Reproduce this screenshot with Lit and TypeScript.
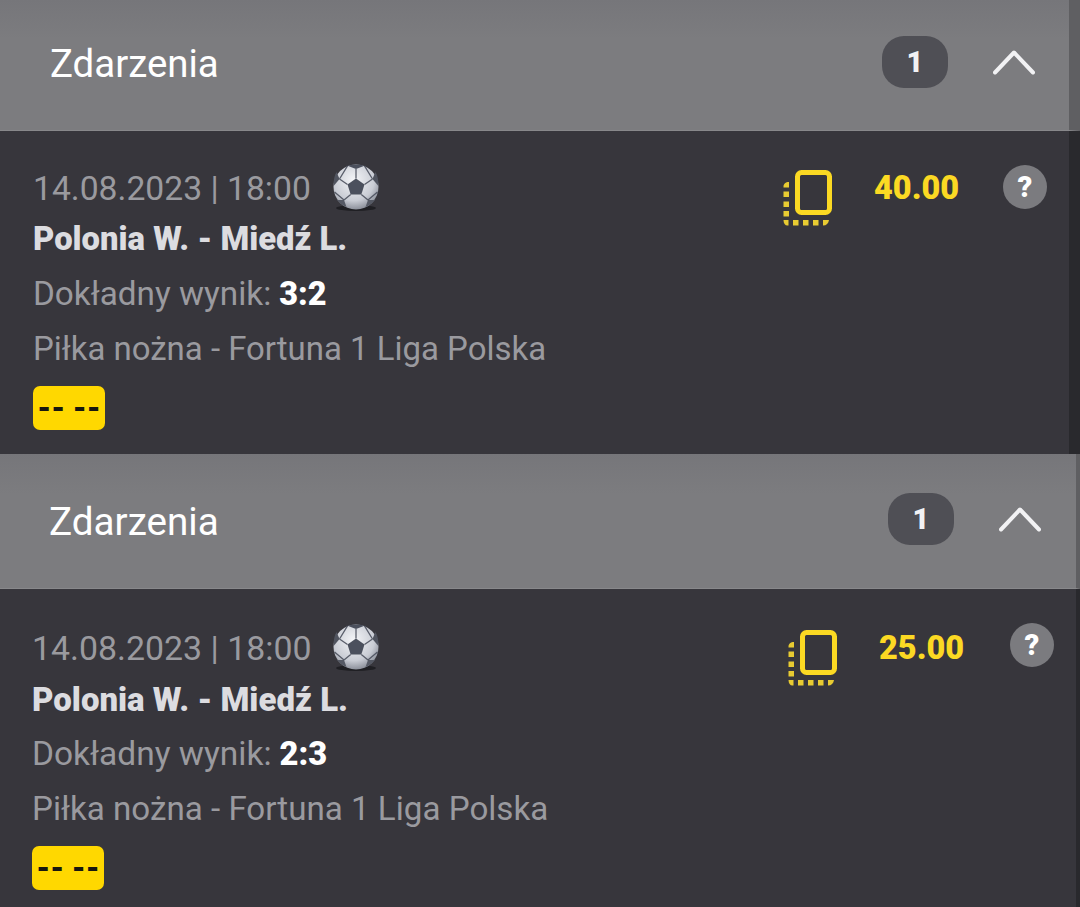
import { LitElement, html, css, svg } from 'lit';
import { customElement, property } from 'lit/decorators.js';

/**
 * One bet leg as shown on the coupon
 */
interface BetEvent {
  score: string;
  odds: string;
  headerHeight: number;
  headerLift: number;
  headerRight: number;
  titleTop: number;
  bodyHeight: number;
  bodyTop: number;
  helpGap: number;
  helpLift: number;
  inset: number;
  titleInset: number;
  stripWidth: number;
  fontScale: number;
}

const EVENTS: BetEvent[] = [
  { score: '3:2', odds: '40.00', headerHeight: 131, headerLift: 7, headerRight: 34, titleTop: 5, bodyHeight: 323, bodyTop: 30, helpGap: 44, helpLift: 0, inset: 33, titleInset: 50, stripWidth: 11, fontScale: 1 },
  { score: '2:3', odds: '25.00', headerHeight: 135, headerLift: 5, headerRight: 35, titleTop: 7, bodyHeight: 318, bodyTop: 32, helpGap: 46, helpLift: 2, inset: 32, titleInset: 49, stripWidth: 4, fontScale: 1.006 },
];

const soccerBall = svg`
  <svg class="ball" viewBox="0 0 48 48" aria-hidden="true">
    <defs>
      <radialGradient id="ball-fill" cx="45%" cy="35%" r="70%">
        <stop offset="0" stop-color="#f4f5f8"></stop>
        <stop offset="0.65" stop-color="#c9ccd4"></stop>
        <stop offset="1" stop-color="#7d818c"></stop>
      </radialGradient>
    </defs>
    <ellipse cx="24" cy="44" rx="20" ry="3" fill="#1f1f23"></ellipse>
    <circle cx="24" cy="23" r="22.5" fill="url(#ball-fill)"></circle>
    <path d="M24 14.500 32.500 20.500 29.300 30.500H18.700L15.500 20.500Z" fill="#4b505d"></path>
    <path d="M15.500 1.800 24 5 32.500 1.800C29.900 .9 27 .5 24 .5S18.100 .9 15.500 1.800Z" fill="#4b505d"></path>
    <path d="M1.600 22 7.500 15 4.600 8C2.400 11.400 1.300 16.500 1.600 22Z" fill="#50545f"></path>
    <path d="M46.400 22 40.500 15 43.400 8C45.600 11.400 46.700 16.500 46.400 22Z" fill="#50545f"></path>
    <path d="M5 36 12 36 14.500 43C10.500 41.500 7.500 39 5 36ZM43 36 36 36 33.500 43C37.500 41.500 40.500 39 43 36Z" fill="#555964"></path>
    <path d="M24 14.500V5M32.500 20.500 40.500 15M15.500 20.500 7.500 15M29.300 30.500 36 36M18.700 30.500 12 36M12 36 2.500 28M36 36 45.500 28M7.500 15 15.500 1.800M40.500 15 32.500 1.800"
      fill="none" stroke="#4b505d" stroke-width="1.300" stroke-opacity="0.9"></path>
  </svg>
`;

const copyIcon = svg`
  <svg class="copy" viewBox="0 0 49 56" aria-hidden="true">
    <rect x="14.500" y="2.500" width="32" height="40" rx="4" fill="none" stroke="#fbd923" stroke-width="5"></rect>
    <g fill="#e8cb32">
      <path d="M6 12V17.500H.5V16.500C.5 14 2.500 12 6 12Z"></path>
      <rect x=".5" y="21.500" width="5.500" height="5.500"></rect>
      <rect x=".5" y="31.500" width="5.500" height="5.500"></rect>
      <rect x=".5" y="41" width="5.500" height="5.500"></rect>
      <path d="M.5 50H5.500V55.500H4.500C2 55.500 .5 53.500 .5 50Z"></path>
      <rect x="10" y="50" width="5.500" height="5.500"></rect>
      <rect x="20" y="50" width="5.500" height="5.500"></rect>
      <rect x="30" y="50" width="5.500" height="5.500"></rect>
      <path d="M40 50H46C45.500 53.500 43.500 55.500 40 55.500Z"></path>
    </g>
  </svg>
`;

@customElement('app-root')
export class AppRoot extends LitElement {
  @property({ type: Array })
  events = EVENTS;

  static override styles = css`
    :host {
      display: block;
      width: 1080px;
      height: 907px;
      overflow: hidden;
      font-family: Roboto, 'Noto Sans', sans-serif;
      background: #37363c;
    }

    .header {
      display: flex;
      align-items: center;
      box-sizing: border-box;
      background: linear-gradient(#76767a, #7c7c7f 30%);
      border-bottom: 1px solid #88888b;
      border-right-style: solid;
      border-right-color: #5f5f62;
    }

    .title {
      flex: 1;
      color: #fff;
      font-weight: 400;
      line-height: 1;
    }

    .count {
      display: flex;
      align-items: center;
      justify-content: center;
      width: 66px;
      height: 52px;
      border-radius: 22px;
      background: #4f4f55;
      color: #f2f2f4;
      font-size: 29px;
      font-weight: 900;
    }

    .chevron {
      width: 42px;
      height: 26px;
      margin-left: 45px;
    }

    .body {
      display: flex;
      align-items: flex-start;
      box-sizing: border-box;
      background: #37363c;
      border-right-style: solid;
      border-right-color: #29292d;
      padding-right: 22px;
    }

    .info {
      flex: 1;
    }

    .row {
      display: flex;
      align-items: center;
      height: 54px;
      color: #9a9a9f;
      white-space: nowrap;
    }

    .when {
      font-size: 1.011em;
    }

    .teams {
      height: 52px;
      margin-top: -2px;
      margin-bottom: 1px;
      color: #dcdce0;
      font-size: 0.985em;
      font-weight: 900;
    }

    .market {
      height: 55px;
    }

    .market b {
      margin-left: 8px;
      color: #fff;
      font-size: 0.975em;
      font-weight: 900;
    }

    .sport {
      font-size: 0.99em;
    }

    .ball {
      width: 48px;
      height: 48px;
      margin-left: 21px;
    }

    .badge {
      display: flex;
      align-items: center;
      justify-content: center;
      width: 72px;
      height: 44px;
      margin-top: 11px;
      border-radius: 7px;
      background: #ffd800;
      color: #17170f;
      font-size: 31px;
      font-weight: 900;
    }

    .stake {
      display: flex;
      align-items: flex-start;
      margin-top: 4px;
    }

    .copy {
      width: 49px;
      height: 56px;
      margin-top: 5px;
    }

    .odds {
      width: 85px;
      margin-left: 42px;
      margin-top: 5px;
      color: #fbd923;
      font-size: 32.500px;
      font-weight: 900;
      line-height: 36px;
      white-space: nowrap;
    }

    .help {
      display: flex;
      align-items: center;
      justify-content: center;
      width: 44px;
      height: 44px;
      border-radius: 50%;
      background: #7b7b7f;
      color: #fff;
      font-size: 29px;
      font-weight: 900;
    }
  `;

  private renderEvent(event: BetEvent) {
    const size = 33.300 * event.fontScale;
    return html`
      <section>
        <div
          class="header"
          style="height:${event.headerHeight}px;padding-bottom:${event.headerLift}px;padding-left:${event.titleInset}px;padding-right:${event.headerRight}px;border-right-width:${event.stripWidth}px"
        >
          <div class="title" style="font-size:${38.400 * event.fontScale}px;margin-top:${event.titleTop}px">Zdarzenia</div>
          <div class="count">1</div>
          <svg class="chevron" viewBox="0 0 42 26" aria-hidden="true">
            <path d="M2 23.500 21 3.500 40 23.500" fill="none" stroke="#f2f2f4" stroke-width="4" stroke-linecap="round" stroke-linejoin="round"></path>
          </svg>
        </div>
        <div
          class="body"
          style="height:${event.bodyHeight}px;padding-top:${event.bodyTop}px;padding-left:${event.inset}px;border-right-width:${event.stripWidth}px;font-size:${size}px"
        >
          <div class="info">
            <div class="row when">14.08.2023 | 18:00 ${soccerBall}</div>
            <div class="row teams">Polonia W. - Miedź L.</div>
            <div class="row market">Dokładny wynik:<b>${event.score}</b></div>
            <div class="row sport">Piłka nożna - Fortuna 1 Liga Polska</div>
            <div class="badge">-- --</div>
          </div>
          <div class="stake">
            ${copyIcon}
            <div class="odds">${event.odds}</div>
            <div class="help" style="margin-left:${event.helpGap}px;margin-top:${-event.helpLift}px">?</div>
          </div>
        </div>
      </section>
    `;
  }

  override render() {
    return this.events.map((event) => this.renderEvent(event));
  }
}
